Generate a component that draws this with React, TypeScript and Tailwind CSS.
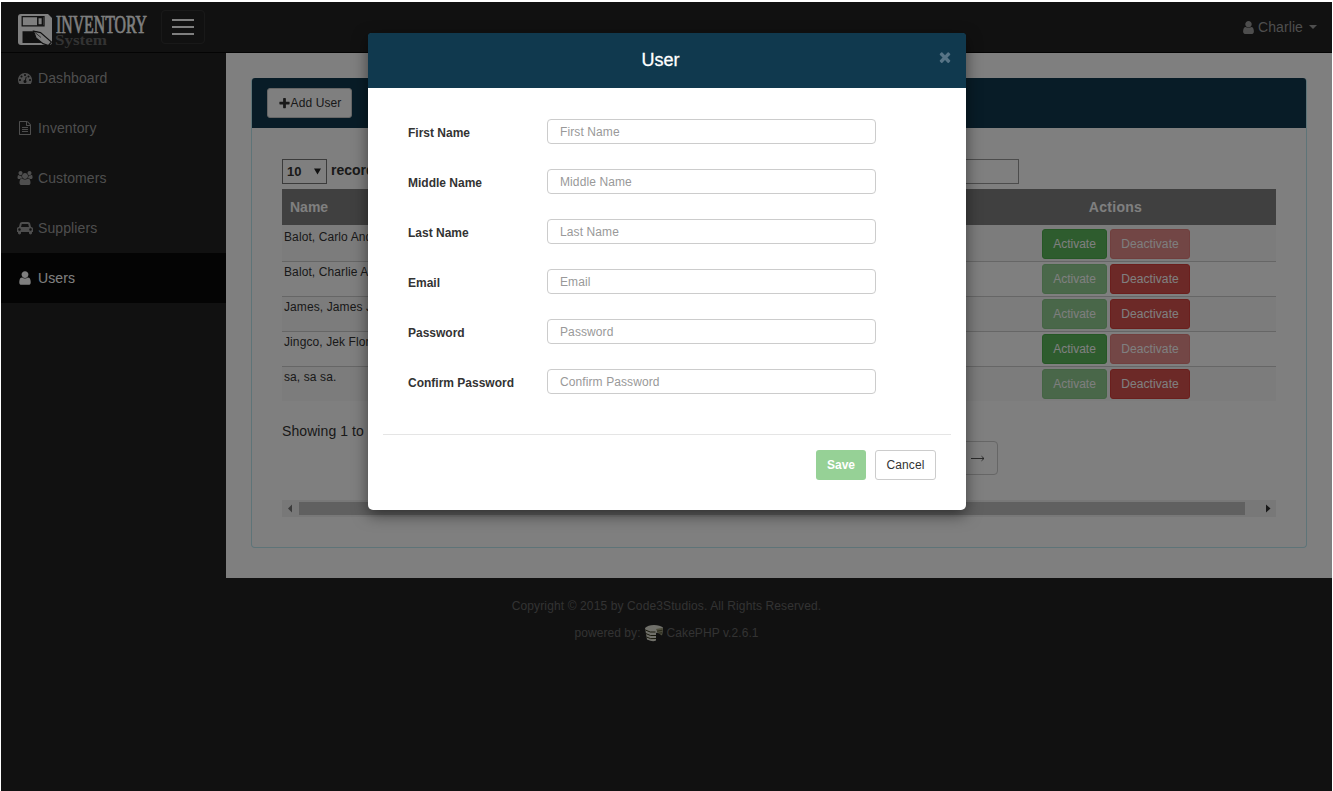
import React from "react";

type IconProps = { d: string; wide?: boolean; className?: string };

function Icon({ d, wide, className }: IconProps) {
  return (
    <svg viewBox={wide ? "0 0 2048 1792" : "0 0 1792 1792"} fill="currentColor" className={className}>
      <path d={d} />
    </svg>
  );
}

const USER =
  "M1536 1399q0 109-62.5 187t-150.5 78h-854q-88 0-150.5-78t-62.5-187q0-85 8.5-160.5t31.5-152 58.5-131 94-89 134.5-34.5q131 128 313 128t313-128q76 0 134.5 34.5t94 89 58.5 131 31.5 152 8.5 160.5zm-256-887q0 159-112.5 271.5t-271.5 112.5-271.5-112.5-112.5-271.5 112.5-271.5 271.5-112.5 271.5 112.5 112.5 271.5z";
const FILE =
  "M1596 380q28 28 48 76t20 88v1152q0 40-28 68t-68 28h-1344q-40 0-68-28t-28-68v-1600q0-40 28-68t68-28h896q40 0 88 20t76 48zm-444-244v376h376q-10-29-22-41l-313-313q-12-12-41-22zm384 1528v-1024h-416q-40 0-68-28t-28-68v-416h-768v1536h1280zm-1024-864q0-14 9-23t23-9h704q14 0 23 9t9 23v64q0 14-9 23t-23 9h-704q-14 0-23-9t-9-23v-64zm736 224q14 0 23 9t9 23v64q0 14-9 23t-23 9h-704q-14 0-23-9t-9-23v-64q0-14 9-23t23-9h704zm0 256q14 0 23 9t9 23v64q0 14-9 23t-23 9h-704q-14 0-23-9t-9-23v-64q0-14 9-23t23-9h704z";
const PLUS =
  "M1600 736v192q0 40-28 68t-68 28h-416v416q0 40-28 68t-68 28h-192q-40 0-68-28t-28-68v-416h-416q-40 0-68-28t-28-68v-192q0-40 28-68t68-28h416v-416q0-40 28-68t68-28h192q40 0 68 28t28 68v416h416q40 0 68 28t28 68z";
const TIMES =
  "M1490 1322q0 40-28 68l-136 136q-28 28-68 28t-68-28l-294-294-294 294q-28 28-68 28t-68-28l-136-136q-28-28-28-68t28-68l294-294-294-294q-28-28-28-68t28-68l136-136q28-28 68-28t68 28l294 294 294-294q28-28 68-28t68 28l136 136q28 28 28 68t-28 68l-294 294 294 294q28 28 28 68z";
const GROUP =
  "M657 896q-162 5-265 128h-134q-82 0-138-40.5t-56-118.5q0-353 124-353 6 0 43.5 21t97.5 42.5 119 21.5q67 0 133-23-5 37-5 66 0 159 93 293zm1071 637q0 120-73 189.5t-194 69.5h-874q-121 0-194-69.5t-73-189.5q0-53 3.5-103.5t14-109 26.5-108.5 43-97.5 62-81 85.5-53.5 111.5-20q10 0 43 21.5t73 48 107 48 135 21.5 135-21.5 107-48 73-48 43-21.5q61 0 111.5 20t85.5 53.5 62 81 43 97.5 26.5 108.5 14 109 3.5 103.5zm-1024-1277q0 106-75 181t-181 75-181-75-75-181 75-181 181-75 181 75 75 181zm704 384q0 159-112.5 271.5t-271.5 112.5-271.5-112.5-112.5-271.5 112.5-271.5 271.5-112.5 271.5 112.5 112.5 271.5zm576 225q0 78-56 118.5t-138 40.5h-134q-103-123-265-128 93-134 93-293 0-29-5-66 66 23 133 23 59 0 119-21.5t97.5-42.5 43.5-21q124 0 124 353zm-128-609q0 106-75 181t-181 75-181-75-75-181 75-181 181-75 181 75 75 181z";
const GAUGE =
  "M384 1152q0-53-37.5-90.5t-90.5-37.5-90.5 37.5-37.5 90.5 37.5 90.5 90.5 37.5 90.5-37.5 37.5-90.5zm192-448q0-53-37.5-90.5t-90.5-37.5-90.5 37.5-37.5 90.5 37.5 90.5 90.5 37.5 90.5-37.5 37.5-90.5zm428 481l101-382q6-26-7.5-48.5t-38.5-29.5-48 6.5-30 39.5l-101 382q-60 5-107 43.5t-63 98.5q-20 77 20 146t117 89 146-20 89-117q16-60-6-117t-72-91zm660-33q0-53-37.5-90.5t-90.5-37.5-90.5 37.5-37.5 90.5 37.5 90.5 90.5 37.5 90.5-37.5 37.5-90.5zm-640-640q0-53-37.5-90.5t-90.5-37.5-90.5 37.5-37.5 90.5 37.5 90.5 90.5 37.5 90.5-37.5 37.5-90.5zm448 192q0-53-37.5-90.5t-90.5-37.5-90.5 37.5-37.5 90.5 37.5 90.5 90.5 37.5 90.5-37.5 37.5-90.5zm320 448q0 261-141 483-19 29-54 29h-1402q-35 0-54-29-141-221-141-483 0-182 71-348t191-286 286-191 348-71 348 71 286 191 191 286 71 348z";
const CAR =
  "M480 1088q0-66-47-113t-113-47-113 47-47 113 47 113 113 47 113-47 47-113zm36-320h1016l-89-357q-2-8-14-17.5t-21-9.5h-768q-9 0-21 9.5t-14 17.5zm1372 320q0-66-47-113t-113-47-113 47-47 113 47 113 113 47 113-47 47-113zm160-96v384q0 14-9 23t-23 9h-96v128q0 80-56 136t-136 56-136-56-56-136v-128h-1024v128q0 80-56 136t-136 56-136-56-56-136v-128h-96q-14 0-23-9t-9-23v-384q0-93 65.5-158.5t158.5-65.5h28l105-419q23-94 104-157.5t179-63.5h768q98 0 179 63.5t104 157.5l105 419h28q93 0 158.5 65.5t65.5 158.5z";

const NAV = [
  { label: "Dashboard", d: GAUGE, wide: false },
  { label: "Inventory", d: FILE, wide: false },
  { label: "Customers", d: GROUP, wide: true },
  { label: "Suppliers", d: CAR, wide: true },
  { label: "Users", d: USER, wide: false, active: true },
];

const ROWS = [
  { name: "Balot, Carlo Andrei", canActivate: true },
  { name: "Balot, Charlie A.", canActivate: false },
  { name: "James, James J.", canActivate: false },
  { name: "Jingco, Jek Flores", canActivate: true },
  { name: "sa, sa sa.", canActivate: false },
];

const FIELDS = ["First Name", "Middle Name", "Last Name", "Email", "Password", "Confirm Password"];

function Logo() {
  return (
    <div className="flex w-[129px]">
      <svg viewBox="0 0 34 32" className="mt-[12px] h-8 w-[34px] shrink-0">
        <path d="M3 0H30L34 4V28Q34 31 31 31H3Q0 31 0 28V3Q0 0 3 0Z" fill="#fff" />
        <path d="M4.2 2.6V11.8H26V2.6Z" fill="none" stroke="#222" strokeWidth="1.3" />
        <path d="M19.8 3.6h4.6v7.4h-4.6z" fill="#fff" stroke="#222" strokeWidth="1.5" />
        <path d="M4.5 17.2H19L28 29H4.5Z" fill="#222" />
        <path d="M5.2 19.5L15 29H5.2Z" fill="#222" />
        <path d="M15.5 17.2L22.5 18.6L33.5 28L30.5 31.5L25 29.6L18 24Z" fill="#fff" stroke="#222" strokeWidth="1.2" />
        <path d="M17 18.5L23 23.5" stroke="#222" strokeWidth="0.7" />
      </svg>
      <svg viewBox="0 0 95 40" className="mt-[9px] ml-[3px] h-10 w-[95px] shrink-0 overflow-visible">
        <text x="1" y="21.5" textLength="91" lengthAdjust="spacingAndGlyphs" fontSize="25.5" fontFamily="Liberation Serif, serif" fill="#fff" stroke="#fff" strokeWidth="0.7">
          INVENTORY
        </text>
        <text x="0" y="34" textLength="52" lengthAdjust="spacingAndGlyphs" fontSize="14.5" fontWeight="bold" fontFamily="Liberation Serif, serif" fill="#666">
          System
        </text>
      </svg>
    </div>
  );
}

function Cake() {
  return (
    <svg viewBox="0 0 18 17" className="mx-1 h-[17px] w-[18px]">
      <path d="M0 3Q3 0 9 0Q15 0 18 2.5L17 10L12.5 7.5L11 8V15.5Q8 17.5 2 14.5Z" fill="#e0e0d4" />
      <path d="M0.4 5Q5 8 10.5 7M0.8 8.5Q5 11.5 11 10.5M1.5 12Q5 14.5 11 13.5" fill="none" stroke="#33331a" strokeWidth="1" />
      <path d="M11 4L18 2.8L17 10.5L12.5 7.5Z" fill="#9a9a78" />
      <path d="M12 6.2L17.5 5.2M13.5 8.2L17 7.8" stroke="#44442b" strokeWidth="0.9" />
    </svg>
  );
}

function Page() {
  return (
    <div className="flex h-full flex-col bg-[#222]">
      <header className="flex h-[51px] shrink-0 border-b border-[#080808]">
        <div className="ml-[17px]">
          <Logo />
        </div>
        <button className="mt-[8px] ml-[14px] flex h-[34px] w-[44px] flex-col items-center justify-center gap-[5px] rounded border border-[#333]">
          <span className="h-[2px] w-[22px] bg-white" />
          <span className="h-[2px] w-[22px] bg-white" />
          <span className="h-[2px] w-[22px] bg-white" />
        </button>
        <div className="mr-[15px] ml-auto flex h-[50px] items-center text-sm text-[#9d9d9d]">
          <Icon d={USER} className="mr-[2px] h-[15px] w-[15px]" />
          <span className="tracking-[0.1px]">Charlie</span>
          <span className="ml-[6px] border-x-4 border-t-4 border-x-transparent border-t-[#9d9d9d]" />
        </div>
      </header>

      <div className="flex h-[525px] shrink-0">
        <nav className="w-[225px] shrink-0">
          {NAV.map((n) => (
            <div
              key={n.label}
              className={
                n.active
                  ? "flex h-[50px] items-center bg-[#080808] pl-4 text-sm text-white"
                  : "flex h-[50px] items-center pl-4 text-sm text-[#9d9d9d]"
              }
            >
              <span className="flex w-4 justify-center">
                <Icon
                  d={n.d}
                  wide={n.wide}
                  className={n.wide ? "h-[14px] w-4 shrink-0" : n.active ? "h-4 w-4 shrink-0" : "h-[14px] w-[14px] shrink-0"}
                />
              </span>
              <span className="ml-[5px] tracking-[0.1px]">{n.label}</span>
            </div>
          ))}
        </nav>

        <main className="min-w-0 flex-1 bg-white pt-[25px] pr-[25px] pl-[25px]">
          <section className="h-[470px] rounded border border-t-0 border-[#bce8f1]">
            <div className="flex h-[50px] items-center rounded-t-[3px] bg-[#10394e] pl-[15px]">
              <button className="flex h-[30px] w-[85px] items-center justify-center rounded-[3px] border border-[#ccc] bg-white text-xs whitespace-nowrap text-[#333]">
                <Icon d={PLUS} className="h-[13px] w-[13px]" />
                <span className="tracking-[0.1px]">Add User</span>
              </button>
            </div>
            <div className="px-[30px] pt-[31px]">
              <div className="flex h-[25px] items-start">
                <div className="flex h-[25px] w-[45px] items-center justify-between border border-[#777] pr-[5px] pl-1 text-[13px] font-bold">
                  10
                  <svg viewBox="0 0 8 7" className="h-[7px] w-[7px]">
                    <path d="M0 0H8L4 7Z" fill="#222" />
                  </svg>
                </div>
                <span className="ml-1 pt-px text-sm font-bold whitespace-nowrap">records per page</span>
                <div className="mr-[257px] ml-auto h-[25px] w-[170px] border border-[#999]" />
              </div>
              <table className="mt-[5px] w-full table-fixed border-collapse">
                <thead>
                  <tr className="h-[36px] bg-[#808080] text-sm text-white">
                    <th className="w-[672px] pl-2 text-left">Name</th>
                    <th className="pl-px tracking-[0.3px]">Actions</th>
                  </tr>
                </thead>
                <tbody>
                  {ROWS.map((r, i) => (
                    <tr
                      key={r.name}
                      className={
                        i === 0
                          ? "h-[36px] bg-[#f9f9f9]"
                          : i % 2
                            ? "h-[35px] border-t border-[#ccc]"
                            : "h-[35px] border-t border-[#ccc] bg-[#f9f9f9]"
                      }
                    >
                      <td
                        className={
                          i === 0
                            ? "p-0 pt-1 pl-[2px] align-top text-xs tracking-[0.1px]"
                            : "p-0 pt-[2px] pl-[2px] align-top text-xs tracking-[0.1px]"
                        }
                      >
                        {r.name}
                      </td>
                      <td className={i === 0 ? "p-0 pt-[2px] pl-[2px] align-middle" : "p-0 pl-[2px] align-middle"}>
                        <div className="flex justify-center gap-[3px] text-xs text-white">
                          <button
                            className={
                              r.canActivate
                                ? "h-[30px] w-[65px] rounded-[3px] border border-[#4cae4c] bg-[#5cb85c]"
                                : "h-[30px] w-[65px] rounded-[3px] border border-[#4cae4c] bg-[#5cb85c] opacity-65"
                            }
                          >
                            Activate
                          </button>
                          <button
                            className={
                              r.canActivate
                                ? "h-[30px] w-[80px] rounded-[3px] border border-[#d43f3a] bg-[#d9534f] tracking-[0.1px] opacity-65"
                                : "h-[30px] w-[80px] rounded-[3px] border border-[#d43f3a] bg-[#d9534f] tracking-[0.1px]"
                            }
                          >
                            Deactivate
                          </button>
                        </div>
                      </td>
                    </tr>
                  ))}
                </tbody>
              </table>
              <div className="mt-[20px] text-sm leading-5 tracking-[0.08px]">Showing 1 to 5 of 5 entries</div>
              <div className="mr-[278px] ml-auto flex h-[34px] w-[90px] items-center justify-end rounded border border-[#ccc] pr-[12px] text-sm text-[#333]">
                <svg viewBox="0 0 14 7" className="h-[7px] w-[14px]" fill="none" stroke="#444" strokeWidth="0.9">
                  <path d="M0 3.5H13M10.5 1.2L13 3.5L10.5 5.8" />
                </svg>
              </div>
              <div className="mt-[25px] flex h-[17px] items-center bg-[#f1f1f1]">
                <svg viewBox="0 0 17 17" className="h-[17px] w-[17px]">
                  <path d="M10 4.5V12.5L6 8.5Z" fill="#777" />
                </svg>
                <div className="h-[13px] w-[946px] bg-[#c1c1c1]" />
                <svg viewBox="0 0 17 17" className="ml-auto h-[17px] w-[17px]">
                  <path d="M7 4.5V12.5L11.5 8.5Z" fill="#333" />
                </svg>
              </div>
            </div>
          </section>
        </main>
      </div>

      <footer className="flex flex-col items-center pt-[18px] text-xs text-[#666]">
        <div className="h-[20px] leading-5 tracking-[0.12px]">Copyright © 2015 by Code3Studios. All Rights Reserved.</div>
        <div className="mt-[7px] flex h-[20px] items-center tracking-[0.07px]">
          powered by:
          <Cake />
          CakePHP v.2.6.1
        </div>
      </footer>
    </div>
  );
}

function UserModal() {
  return (
    <div className="absolute top-[31px] left-[367px] h-[477px] w-[598px] rounded-[5px] bg-white shadow-[0_5px_15px_rgba(0,0,0,0.5)]">
      <div className="relative flex h-[55px] items-center justify-center rounded-t-[3px] bg-[#10394e] pr-[13px] pb-[2px] text-lg text-white">
        <span className="[-webkit-text-stroke:0.3px_white]">User</span>
        <Icon d={TIMES} className="absolute top-[16px] right-[13px] h-4 w-4 text-[#577486]" />
      </div>
      <form className="flex flex-col gap-[25px] pt-[31px] pl-10">
        {FIELDS.map((f) => (
          <label key={f} className="flex h-[25px] items-center text-xs">
            <span className="w-[139px] pt-[3px] font-bold">{f}</span>
            <input
              placeholder={f}
              className="h-[25px] w-[329px] rounded border border-[#ccc] px-3 text-xs tracking-[0.1px] placeholder:text-[#999]"
            />
          </label>
        ))}
      </form>
      <div className="mx-[15px] mt-[40px] flex justify-end gap-[9px] border-t border-[#e5e5e5] pt-[15px] pr-[15px] text-xs">
        <button className="h-[30px] w-[50px] rounded-[3px] bg-[#96d196] font-bold text-white">Save</button>
        <button className="h-[30px] w-[61px] rounded-[3px] border border-[#ccc] bg-white tracking-[0.1px] text-[#333]">Cancel</button>
      </div>
    </div>
  );
}

export default function App() {
  return (
    <div className="h-[791px] w-[1333px] overflow-hidden bg-white px-px pt-[2px] font-['Liberation_Sans',Arial,sans-serif] text-[#333]">
      <div className="relative h-full">
        <Page />
        <div className="absolute inset-0 bg-black/50" />
        <UserModal />
      </div>
    </div>
  );
}
